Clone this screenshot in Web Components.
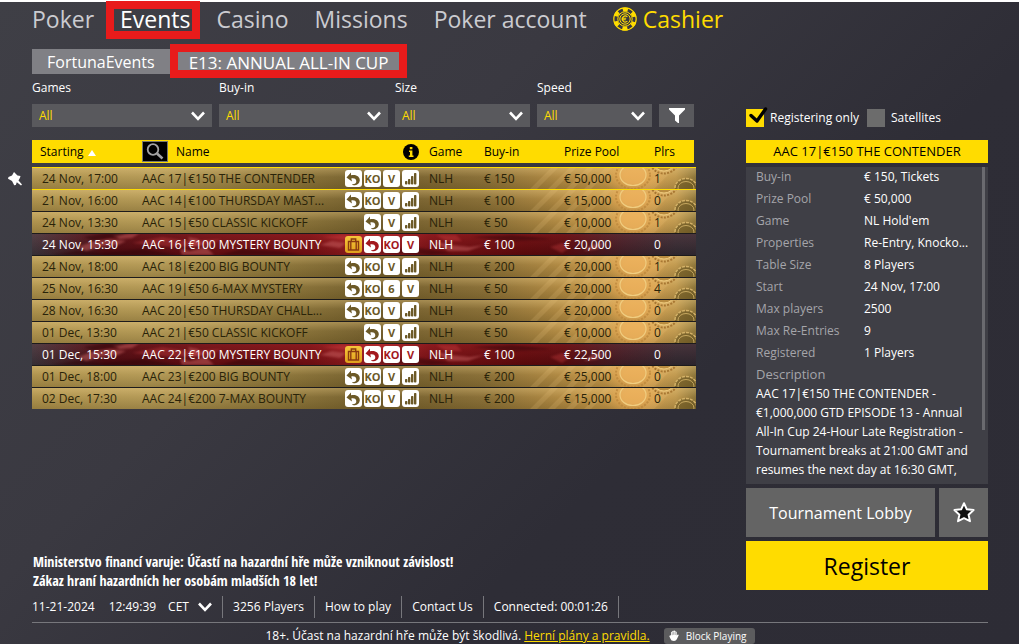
<!DOCTYPE html>
<html lang="en">
<head>
<meta charset="utf-8">
<title>Events</title>
<style>
    html, body {
        margin: 0;
        min-height: 100%;
    }

    body {
        font-family: "Open Sans", "Noto Sans", sans-serif;
        font-size: 12px;
        line-height: 18px;
        color: #fff;
        --yellow: #ffdc00;
        --grey: #59595d;
        --red: #e81b1b;
    }
</style>
</head>
<body>
<poker-lobby></poker-lobby>

<script>
// Base class, clones the markup of the subclass into its shadow root.
class BaseElement extends HTMLElement {
    constructor() {
        super();
        this.attachShadow({ mode: "open" });
        const template = document.createElement("template");
        template.innerHTML = `<style>*, :host { box-sizing: border-box; }</style>` + this.render();
        this.shadowRoot.appendChild(template.content.cloneNode(true));
    }

    render() {
        return "<slot></slot>";
    }
}

// Shared by the drop-downs
const CHEVRON = `<svg width="14" height="10" viewBox="0 0 14 10" fill="none" stroke="#fff" stroke-width="2.6"><path d="M1 1.5 7 7.8 13 1.5"/></svg>`;

class MainNav extends BaseElement {
    render() {
        return `
        <style>
            :host { display: block; }
            nav {
                display: flex;
                align-items: center;
                gap: 26px;
                height: 33px;
                font-size: 23px;
                line-height: 32px;
                white-space: nowrap;
            }
            a { color: #cbcbd0; text-decoration: none; }
            .active { position: relative; color: #fff; }
            .active::after {
                content: "";
                position: absolute;
                inset: -2px -9px -4px -14px;
                border: 8px solid var(--red);
            }
            .cashier {
                display: flex;
                align-items: center;
                gap: 6px;
                color: var(--yellow);
            }
        </style>
        <nav>
            <a href="#poker">Poker</a>
            <a href="#events" class="active">Events</a>
            <a href="#casino">Casino</a>
            <a href="#missions">Missions</a>
            <a href="#account">Poker account</a>
            <a href="#cashier" class="cashier">
                <svg width="24" height="24" viewBox="0 0 24 24" fill="none" stroke="#ffdc00">
                    <circle cx="12" cy="12" r="11.2" stroke-width="1.2"/>
                    <circle cx="12" cy="12" r="9.6" stroke-width="4" stroke-dasharray="5.03 5.03" stroke-dashoffset="2.5" transform="rotate(30 12 12)"/>
                    <circle cx="12" cy="12" r="7.2" stroke-width="1"/>
                    <circle cx="12" cy="12" r="5.2" stroke-width="1"/>
                    <path d="M14.4 9.8a3 3 0 1 0 0 4.4M8.6 11.3h4.6M8.6 12.8h4.2" stroke-width="1.1"/>
                </svg>
                <span>Cashier</span>
            </a>
        </nav>`;
    }
}
customElements.define("main-nav", MainNav);

class EventTabs extends BaseElement {
    render() {
        return `
        <style>
            :host { display: flex; }
            button {
                position: relative;
                height: 25px;
                padding: 0 15px;
                border: 0;
                background: #808085;
                color: #fff;
                font: inherit;
                font-size: 16px;
                line-height: 27px;
                white-space: nowrap;
            }
            .active { padding: 0 19px; font-size: 17px; }
            .active::after {
                content: "";
                position: absolute;
                inset: -5px 0 -4px;
                border: 8px solid var(--red);
            }
        </style>
        <button type="button">FortunaEvents</button>
        <button type="button" class="active">E13: ANNUAL ALL-IN CUP</button>`;
    }
}
customElements.define("event-tabs", EventTabs);

class FilterSelect extends BaseElement {
    render() {
        return `
        <style>
            :host { display: block; }
            label { display: block; line-height: 18px; margin-bottom: 7px; }
            .box { display: grid; align-items: center; background: var(--grey); }
            .box > * { grid-area: 1 / 1; }
            select {
                appearance: none;
                width: 100%;
                height: 23px;
                padding: 0 7px;
                border: 0;
                background: none;
                color: var(--yellow);
                font: inherit;
            }
            svg { justify-self: end; margin-right: 7px; pointer-events: none; }
        </style>
        <label for="filter"><slot></slot></label>
        <div class="box">
            <select id="filter"><option>All</option></select>
            ${CHEVRON}
        </div>`;
    }
}
customElements.define("filter-select", FilterSelect);

class FilterBar extends BaseElement {
    render() {
        return `
        <style>
            :host {
                display: grid;
                grid-template-columns: 180fr 169fr 135fr 115fr 35px;
                gap: 7px;
                align-items: end;
            }
            button {
                display: grid;
                place-items: center;
                height: 23px;
                padding: 0;
                border: 0;
                background: var(--grey);
            }
        </style>
        <filter-select>Games</filter-select>
        <filter-select>Buy-in</filter-select>
        <filter-select>Size</filter-select>
        <filter-select>Speed</filter-select>
        <button type="button" aria-label="Filter">
            <svg width="16" height="17" viewBox="0 0 16 17" fill="#fff"><path d="M0 1h16v1.4L10 8.6V16H9L6 13.6V8.6L0 2.4Z"/></svg>
        </button>`;
    }
}
customElements.define("filter-bar", FilterBar);

// Small square that shows a property of the tournament
class InfoTag extends BaseElement {
    static ICONS = {
        rebuy: `<svg viewBox="0 0 17 17"><path fill="currentColor" d="M1.5 7.5 6 2.5v2.8C11 4 15 6.5 14.8 10.6 14.6 13.3 12.5 15 10 15.3 8.5 15.4 7.5 14.9 6.8 14.3 9.5 14.6 11.5 13.3 11.3 11 11 8.5 8.5 8 6.3 8.5L7 11.6Z"/></svg>`,
        bars: `<svg viewBox="0 0 17 17" fill="currentColor"><rect x="3" y="11" width="2.4" height="3.5" rx=".8"/><rect x="6" y="9" width="2.4" height="5.5" rx=".8"/><rect x="9" y="6" width="2.4" height="8.5" rx=".8"/><rect x="12" y="3" width="2.4" height="11.5" rx=".8"/></svg>`,
        chest: `<svg viewBox="0 0 17 17" fill="none" stroke="currentColor" stroke-width="1.4"><path d="M3.5 5.5h10v8.5h-10ZM6.3 5.5V3h4.4v2.5M5.8 5.5v8.5M11.2 5.5v8.5"/></svg>`
    };

    render() {
        return `
        <style>
            :host {
                display: inline-block;
                width: 17px;
                height: 17px;
                overflow: hidden;
                border-radius: 3px;
                background: #fff;
                color: var(--tag-ink);
                font-size: 11px;
                font-weight: 700;
                line-height: 17px;
                text-align: center;
            }
            :host([kind="chest"]) { background: linear-gradient(#f6c63c, #e0a01c); color: #8c3a10; }
            svg { display: block; width: 17px; height: 17px; }
        </style>
        <span id="content"><slot></slot></span>`;
    }

    connectedCallback() {
        const icon = InfoTag.ICONS[this.getAttribute("kind")];
        if (icon) {
            this.shadowRoot.querySelector("#content").innerHTML = icon;
        }
    }
}
customElements.define("info-tag", InfoTag);

// Background artwork of a row
class RowArt extends BaseElement {
    render() {
        return `
        <style>
            :host {
                position: absolute;
                inset: 0;
                z-index: -1;
                overflow: hidden;
                pointer-events: none;
                background:
                    linear-gradient(rgba(255, 222, 150, .35), rgba(255, 222, 150, 0) 45%, rgba(60, 45, 5, .22)),
                    linear-gradient(90deg, #b0944f, #b49a57 18%, #8f783d 38%, #75602f 52%, #8b7139 68%, #c09448 84%, #d2a456 94%, #c19a50 97%, #8d763a);
            }
            svg { display: block; position: absolute; top: 0; right: 0; height: 22px; }
            .smoke { display: none; filter: blur(1px); }
            :host([kind="mystery"]) {
                background:
                    linear-gradient(rgba(255, 90, 90, .12), rgba(30, 0, 0, .2)),
                    linear-gradient(90deg, rgba(60, 20, 35, 0), #4c0b12 11%, #6b1015 26%, #7b1115 42%, #ab2429 52%, #7d1216 60%, #650b0e 74%, #5d0c10 80%, rgba(80, 20, 30, .5) 89%, rgba(60, 30, 40, 0) 97%);
            }
            :host([kind="mystery"]) .coins { display: none; }
            :host([kind="mystery"]) .smoke { display: block; }
        </style>
        <svg class="coins" width="180" height="22" viewBox="0 0 180 22" fill="none">
            <defs>
                <radialGradient id="glow"><stop offset=".3" stop-color="#efae55" stop-opacity=".7"/><stop offset="1" stop-color="#e8a851" stop-opacity="0"/></radialGradient>
            </defs>
            <path fill="#f3cf86" fill-opacity=".16" d="M14 22 36 0h7L21 22ZM32 22 54 0h7L39 22ZM50 22 72 0h7L57 22ZM68 22 90 0h7L75 22ZM126 22 148 0h12L138 22Z"/>
            <ellipse cx="118" cy="10" rx="32" ry="20" fill="url(#glow)"/>
            <ellipse cx="117" cy="8" rx="13" ry="10.5" fill="#f0b765" fill-opacity=".4" stroke="#f0cd80" stroke-width="1.2"/>
            <ellipse cx="117" cy="8" rx="17" ry="14" stroke="#b9853a" stroke-opacity=".7" stroke-width="2" stroke-dasharray="2 1.5"/>
            <ellipse cx="148" cy="-4" rx="10" ry="8" fill="#b98c40" stroke="#efcb7e"/>
            <ellipse cx="148" cy="-4" rx="13" ry="10.500" stroke="#a87732" stroke-width="2" stroke-dasharray="2 1.3"/>
            <ellipse cx="170" cy="21" rx="11" ry="9.500" fill="#64511f" fill-opacity=".6" stroke="#d3b167" stroke-width="1.5" stroke-dasharray="3 1"/>
            <ellipse cx="170" cy="21" rx="8" ry="6.500" stroke="#c6a75f"/>
        </svg>
        <svg class="smoke" width="664" height="22" viewBox="0 0 664 22">
            <path fill="#c8605f" fill-opacity=".5" d="M46 14 62 8 78 6 94 8 86 12 68 14 54 18ZM80 2 108 0 100 5 88 6ZM148 16 158 18 174 14 182 22H150ZM156 4 166 6 170 12 160 14ZM288 12 300 8 314 10 308 15ZM402 8 418 12 438 14 452 12 436 18 416 18ZM552 18 560 12 572 10 566 16Z"/>
            <path fill="#270408" fill-opacity=".45" d="M20 22 44 18 70 20 110 16 146 22ZM52 4 74 0H96L84 4 62 8ZM188 22 210 16 250 18 270 22ZM340 20 380 14 420 20 400 22ZM440 4 480 2 520 6 480 8Z"/>
            <path fill="#e04848" fill-opacity=".3" d="M100 10 130 4 156 8 190 6 176 12 140 14ZM290 4 310 2 336 5 320 8ZM404 2 424 2 430 8 414 8ZM518 14 530 10 538 14 530 20Z"/>
        </svg>`;
    }
}
customElements.define("row-art", RowArt);

class TournamentTable extends BaseElement {
    static ROWS = [
        ["24 Nov, 17:00", "AAC 17|€150 THE CONTENDER", "rebuy KO V bars", "€ 150", "€ 50,000", "1"],
        ["21 Nov, 16:00", "AAC 14|€100 THURSDAY MAST...", "rebuy KO V bars", "€ 100", "€ 15,000", "0"],
        ["24 Nov, 13:30", "AAC 15|€50 CLASSIC KICKOFF", "rebuy V bars", "€ 50", "€ 10,000", "1"],
        ["24 Nov, 15:30", "AAC 16|€100 MYSTERY BOUNTY", "chest rebuy KO V", "€ 100", "€ 20,000", "0"],
        ["24 Nov, 18:00", "AAC 18|€200 BIG BOUNTY", "rebuy KO V bars", "€ 200", "€ 20,000", "1"],
        ["25 Nov, 16:30", "AAC 19|€50 6-MAX MYSTERY", "rebuy KO 6 V", "€ 50", "€ 20,000", "4"],
        ["28 Nov, 16:30", "AAC 20|€50 THURSDAY CHALL...", "rebuy KO V bars", "€ 50", "€ 20,000", "0"],
        ["01 Dec, 13:30", "AAC 21|€50 CLASSIC KICKOFF", "rebuy V bars", "€ 50", "€ 10,000", "0"],
        ["01 Dec, 15:30", "AAC 22|€100 MYSTERY BOUNTY", "chest rebuy KO V", "€ 100", "€ 22,500", "0"],
        ["01 Dec, 18:00", "AAC 23|€200 BIG BOUNTY", "rebuy KO V bars", "€ 200", "€ 25,000", "0"],
        ["02 Dec, 17:30", "AAC 24|€200 7-MAX BOUNTY", "rebuy KO V bars", "€ 200", "€ 15,000", "0"]
    ];

    render() {
        return `
        <style>
            :host { display: block; }
            table {
                width: 100%;
                table-layout: fixed;
                border-collapse: separate;
                border-spacing: 0;
            }
            th, td {
                padding: 0;
                text-align: left;
                font-weight: 400;
                white-space: nowrap;
            }
            th {
                height: 27px;
                border-bottom: 4px solid transparent;
                background: var(--yellow) padding-box;
                color: #000;
            }
            th:first-child { padding-left: 8px; }
            th:last-child { border-right: 2px solid transparent; }
            th svg { display: block; }
            .icons { padding-right: 10px; text-align: right; }
            .name { display: flex; align-items: center; gap: 8px; }
            .name button {
                display: grid;
                place-items: center;
                width: 26px;
                height: 21px;
                padding: 0;
                border: 1px solid #77776f;
                background: #000;
            }
            th.icons svg { margin-left: auto; }
            .arrow { display: inline-block; margin-left: 4px; border: 4px solid transparent; border-top: 0; border-bottom: 6px solid #fff; }
            tbody tr {
                position: relative;
                z-index: 0;
                color: #292309;
                --tag-ink: #6c5927;
            }
            tbody tr.mystery { color: #fff; --tag-ink: #a3191e; }
            td {
                height: 22px;
                border-top: 1px solid #1d1b1c;
                line-height: 20px;
            }
            tr.picked td { border-color: var(--yellow); }
            td:first-child { padding-left: 10px; }
            .tags { display: flex; justify-content: flex-end; gap: 2px; }
            .pin { position: absolute; left: -25px; top: 4px; }
        </style>
        <table>
            <colgroup>
                <col style="width: 110px"><col><col style="width: 87px"><col style="width: 55px">
                <col style="width: 80px"><col style="width: 90px"><col style="width: 42px">
            </colgroup>
            <thead>
                <tr>
                    <th>Starting<span class="arrow"></span></th>
                    <th>
                        <div class="name">
                            <button type="button" aria-label="Search">
                                <svg width="18" height="17" viewBox="0 0 18 17" fill="none" stroke="#a2a2a2"><circle cx="7" cy="6.5" r="5.3" stroke-width="1.8"/><path d="m11 10.5 5.5 5" stroke-width="2.6"/></svg>
                            </button>
                            <span>Name</span>
                        </div>
                    </th>
                    <th class="icons"><svg width="16" height="16" viewBox="0 0 16 16"><circle cx="8" cy="8" r="8"/><path fill="#ffdc00" d="M6.8 3h2.6v2.2H6.8ZM6 6.5h3.4v5H10.5V13H5.8v-1.5H7V8H6Z"/></svg></th>
                    <th>Game</th>
                    <th>Buy-in</th>
                    <th>Prize Pool</th>
                    <th>Plrs</th>
                </tr>
            </thead>
            <tbody></tbody>
        </table>`;
    }

    connectedCallback() {
        const body = this.shadowRoot.querySelector("tbody");
        body.innerHTML = TournamentTable.ROWS.map((row, i) => this._rowMarkup(row, i)).join("");
    }

    _rowMarkup([start, name, tags, buyIn, pool, players], index) {
        const mystery = tags.startsWith("chest");
        const classes = [mystery ? "mystery" : "", index < 2 ? "picked" : ""].join(" ");
        const pin = index === 0
            ? `<svg class="pin" width="16" height="16" viewBox="0 0 16 16" fill="#fff"><path d="M7 1 10.5 4.500 13.500 5 13 6.800 11.500 9.500 15 13.500 14 14.500 9.800 11.300 8.800 14 7.200 14.200 5 10 1 7.800 1.500 6 5 4.500Z"/></svg>`
            : "";
        return `
            <tr class="${classes}">
                <td><row-art kind="${mystery ? "mystery" : "gold"}"></row-art>${pin}${start}</td>
                <td>${name}</td>
                <td class="icons"><div class="tags">${tags.split(" ").map(this._tagMarkup).join("")}</div></td>
                <td>NLH</td>
                <td>${buyIn}</td>
                <td>${pool}</td>
                <td>${players}</td>
            </tr>`;
    }

    _tagMarkup(tag) {
        return InfoTag.ICONS[tag] ? `<info-tag kind="${tag}"></info-tag>` : `<info-tag>${tag}</info-tag>`;
    }
}
customElements.define("tournament-table", TournamentTable);

class CheckOption extends BaseElement {
    render() {
        return `
        <style>
            :host { display: block; }
            label { display: flex; align-items: center; gap: 6px; white-space: nowrap; }
            .box { display: grid; }
            .box > * { grid-area: 1 / 1; }
            input {
                appearance: none;
                width: 18px;
                height: 18px;
                margin: 0;
                background: #6c6c6c;
            }
            input:checked { background: var(--yellow); }
            svg { display: none; width: 18px; height: 18px; overflow: visible; pointer-events: none; }
            input:checked + svg { display: block; }
        </style>
        <label>
            <span class="box">
                <input type="checkbox">
                <svg viewBox="0 0 18 18" fill="none" stroke="#000" stroke-width="3.4" stroke-linecap="round" stroke-linejoin="round"><path d="M5 6.5 11 12 19.5 0"/></svg>
            </span>
            <slot></slot>
        </label>`;
    }

    connectedCallback() {
        this.shadowRoot.querySelector("input").checked = this.hasAttribute("checked");
    }
}
customElements.define("check-option", CheckOption);

class TournamentDetails extends BaseElement {
    static FACTS = [
        ["Buy-in", "€ 150, Tickets"],
        ["Prize Pool", "€ 50,000"],
        ["Game", "NL Hold'em"],
        ["Properties", "Re-Entry, Knocko..."],
        ["Table Size", "8 Players"],
        ["Start", "24 Nov, 17:00"],
        ["Max players", "2500"],
        ["Max Re-Entries", "9"],
        ["Registered", "1 Players"]
    ];

    render() {
        const facts = TournamentDetails.FACTS.map(([label, value]) => `<dt>${label}</dt><dd>${value}</dd>`).join("");
        return `
        <style>
            :host { display: flex; flex-direction: column; gap: 4px; }
            h2 {
                margin: 0;
                background: var(--yellow);
                color: #000;
                font-size: 13px;
                font-weight: 400;
                line-height: 23px;
                text-align: center;
            }
            .panel {
                position: relative;
                flex: 1;
                padding: 0 16px 4px 10px;
                background: #3f3f46;
            }
            .thumb {
                position: absolute;
                top: 0;
                right: 3px;
                width: 3px;
                height: 83%;
                background: #6a6a6f;
            }
            dl {
                display: grid;
                grid-template-columns: 108px 1fr;
                margin: 0;
                line-height: 22px;
                white-space: nowrap;
            }
            dt, h3 { color: #a5a5aa; }
            dt { margin-top: -1px; margin-bottom: 1px; }
            dd { margin: -1px 0 1px; }
            h3 { margin: 0; font-size: 13px; font-weight: 400; line-height: 19px; }
            p { margin: 0; line-height: 19px; white-space: nowrap; }
            .actions { display: flex; gap: 4px; }
            button {
                display: grid;
                place-items: center;
                height: 49px;
                padding: 0;
                border: 0;
                background: #646464;
                color: #fff;
                font: inherit;
                font-size: 16px;
            }
            .lobby { flex: 1; }
            .star { width: 49px; }
            .register { background: var(--yellow); color: #000; font-size: 23px; }
        </style>
        <h2>AAC 17|€150 THE CONTENDER</h2>
        <div class="panel">
            <dl>${facts}</dl>
            <h3>Description</h3>
            <p>AAC 17|€150 THE CONTENDER -<br>€1,000,000 GTD EPISODE 13 - Annual<br>All-In Cup 24-Hour Late Registration -<br>Tournament breaks at 21:00 GMT and<br>resumes the next day at 16:30 GMT,</p>
            <div class="thumb"></div>
        </div>
        <div class="actions">
            <button type="button" class="lobby">Tournament Lobby</button>
            <button type="button" class="star" aria-label="Favourite">
                <svg width="24" height="23" viewBox="0 0 22 21"><path d="m11 2 2.6 5.6 6.2.7-4.6 4.2 1.3 6L11 15.7l-5.5 2.800 1.3-6L2.200 8.300l6.200-.7Z" fill="#111" stroke="#fff" stroke-width="1.8" stroke-linejoin="round"/></svg>
            </button>
        </div>
        <button type="button" class="register">Register</button>`;
    }
}
customElements.define("tournament-details", TournamentDetails);

class StatusBar extends BaseElement {
    render() {
        return `
        <style>
            :host { display: block; }
            .status { display: flex; height: 22px; line-height: 22px; white-space: nowrap; }
            .status > * { padding: 0 10px; border-right: 1px solid #77777c; }
            .status > :first-child { padding-left: 0; }
            .status a { color: #fff; text-decoration: none; }
            .clock { display: flex; }
            .clock time + time { margin: 0 12px 0 14px; }
            .zone { display: grid; align-items: center; width: 44px; }
            .zone > * { grid-area: 1 / 1; }
            .zone svg { justify-self: end; pointer-events: none; }
            select {
                appearance: none;
                width: 100%;
                height: 22px;
                padding: 0;
                border: 0;
                background: none;
                color: #fff;
                font: inherit;
            }
            .legal {
                display: flex;
                justify-content: center;
                align-items: center;
                gap: 14px;
                margin-top: 4px;
                padding-top: 4px;
                border-top: 1px solid #77777c;
                line-height: 17px;
                white-space: nowrap;
            }
            .legal a { color: var(--yellow); }
            .legal button {
                display: flex;
                align-items: center;
                gap: 7px;
                height: 16px;
                padding: 0 8px 0 5px;
                border: 0;
                border-radius: 3px;
                background: #5c5c5e;
                color: #fff;
                font: inherit;
                font-size: 10px;
                line-height: 16px;
            }
        </style>
        <div class="status">
            <div class="clock">
                <time>11-21-2024</time>
                <time>12:49:39</time>
                <div class="zone">
                    <select aria-label="Time zone"><option>CET</option></select>
                    ${CHEVRON}
                </div>
            </div>
            <span>3256 Players</span>
            <a href="#help">How to play</a>
            <a href="#contact">Contact Us</a>
            <span>Connected: 00:01:26</span>
        </div>
        <div class="legal">
            <span>18+. Účast na hazardní hře může být škodlivá. <a href="#rules">Herní plány a pravidla.</a></span>
            <button type="button">
                <svg width="10" height="11" viewBox="0 0 10 11" fill="#fff"><path d="M2 5V2.2Q2.6 1.3 3.2 2V1.2Q4 .3 4.7 1.1V.8Q5.5 0 6.2.9V1.6Q7.2 1 7.7 2V5.5L8.8 4.6Q10 4.6 9.6 5.6L7.8 9.3Q7 11 5 11 2 11 1.3 8.5L.3 6.3Q.4 5.2 1.3 5.5Z"/><path d="M3.2 2.2v3M4.7 1.5v3.3M6.2 2v3" stroke="#5c5c5e" stroke-width=".5"/></svg>
                Block Playing
            </button>
        </div>`;
    }
}
customElements.define("status-bar", StatusBar);

class PokerLobby extends BaseElement {
    render() {
        return `
        <style>
            :host {
                display: flex;
                flex-direction: column;
                min-height: 100vh;
                padding: 0 31px 0 32px;
                border-top: 2px solid #fff;
                background: linear-gradient(135deg, #3f3f46, #3a3941 35%, #2e2d36 65%, #2d2c35);
            }
            .content { display: flex; flex: 1; gap: 50px; margin: 14px 0 6px; }
            main { display: flex; flex: 1; flex-direction: column; min-width: 0; }
            filter-bar { margin: 5px 2px 13px 0; }
            .warning {
                margin: auto 0 0 1px;
                padding-top: 16px;
                font: 700 14px/19px "Open Sans Condensed", "Roboto Condensed", "Liberation Sans Narrow", sans-serif;
            }
            aside { display: flex; flex-direction: column; width: 242px; padding-top: 60px; }
            .options { display: flex; gap: 8px; margin-bottom: 13px; }
            tournament-details { flex: 1; }
        </style>
        <main-nav></main-nav>
        <div class="content">
            <main>
                <event-tabs></event-tabs>
                <filter-bar></filter-bar>
                <tournament-table></tournament-table>
                <p class="warning">Ministerstvo financí varuje: Účastí na hazardní hře může vzniknout závislost!<br>Zákaz hraní hazardních her osobám mladších 18 let!</p>
            </main>
            <aside>
                <div class="options">
                    <check-option checked>Registering only</check-option>
                    <check-option>Satellites</check-option>
                </div>
                <tournament-details></tournament-details>
            </aside>
        </div>
        <status-bar></status-bar>`;
    }
}
customElements.define("poker-lobby", PokerLobby);
</script>
</body>
</html>
